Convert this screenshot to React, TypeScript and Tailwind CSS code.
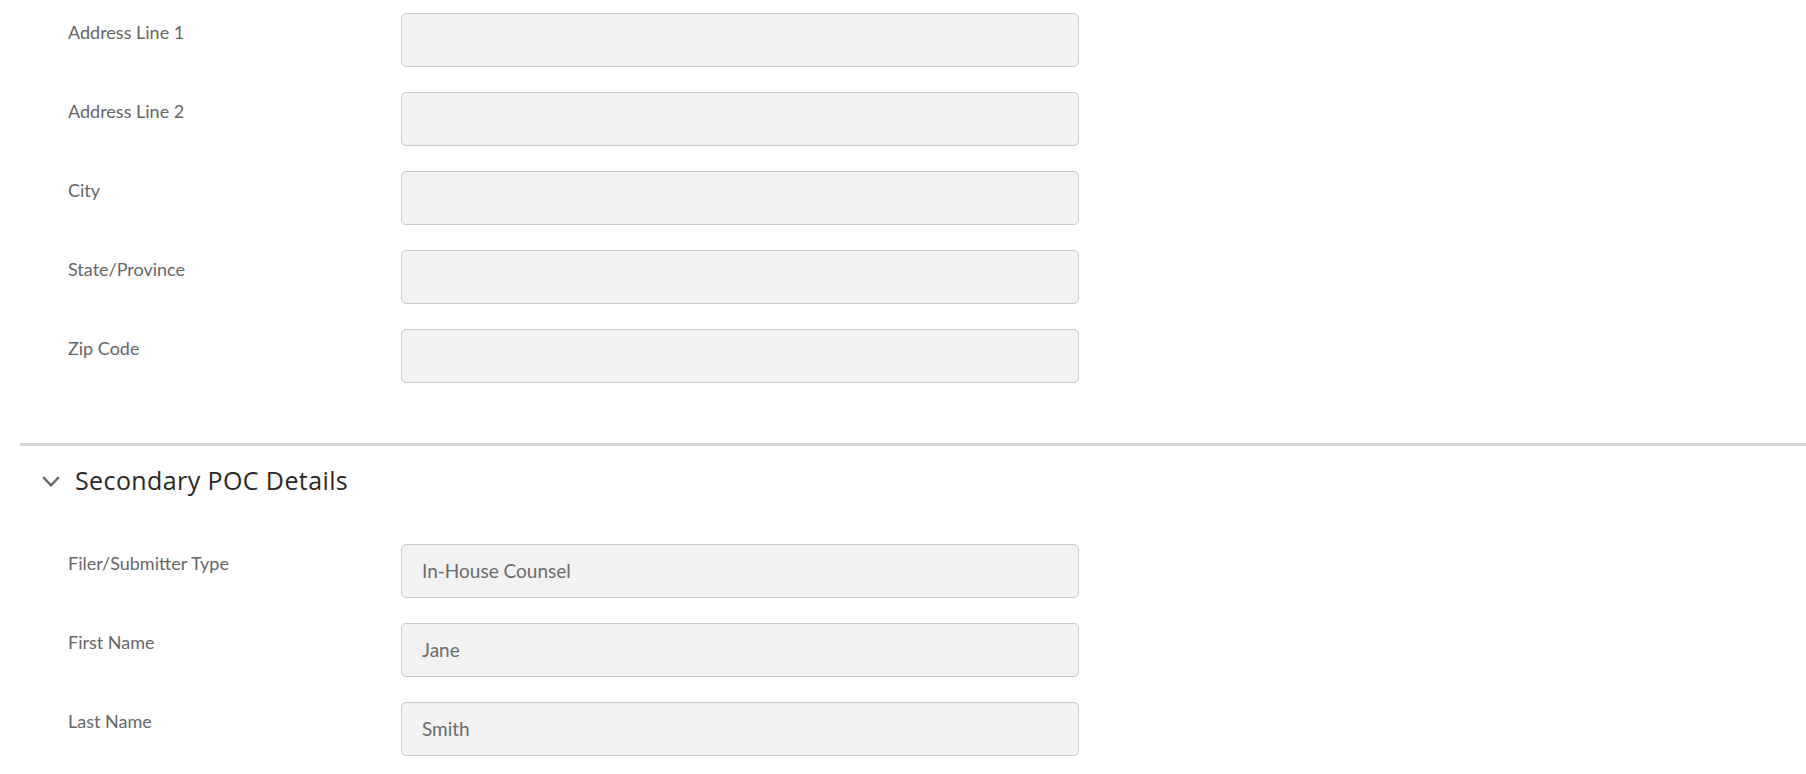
import React from "react";

function Field({ label, value }: { label: string; value?: string }) {
  return (
    <div className="flex items-start">
      <div
        className="w-[333px] shrink-0 pt-[7px] text-[18px] leading-6 text-[#666666]"
        style={{ fontFamily: "Lato, 'Liberation Sans', sans-serif" }}
      >
        {label}
      </div>
      <div
        className="flex h-[54px] w-[678px] items-center rounded-[5px] border border-[#c9c9c9] bg-[#f2f2f2] pl-[20px] text-[19px] text-[#6b6b6b]"
        style={{ fontFamily: "Lato, 'Liberation Sans', sans-serif" }}
      >
        {value}
      </div>
    </div>
  );
}

export default function App() {
  return (
    <div className="h-[774px] w-full overflow-hidden bg-white">
      <div className="flex flex-col gap-[25px] pl-[68px] pt-[13px]">
        <Field label="Address Line 1" />
        <Field label="Address Line 2" />
        <Field label="City" />
        <Field label="State/Province" />
        <Field label="Zip Code" />
      </div>
      <div className="ml-[20px] mt-[60px] h-[3px] bg-[#d4d4d4]" />
      <div className="flex items-center pl-[42px] pt-[18px]">
        <svg width="18" height="11" viewBox="0 0 18 11" className="mr-[15px] mt-[3px]">
          <polyline points="1.2,1.2 9,9.4 16.8,1.2" fill="none" stroke="#6b6b6b" strokeWidth="2.4" />
        </svg>
        <span
          className="text-[25px] font-medium leading-8 tracking-[0.4px] text-[#2b2826]"
          style={{ fontFamily: "'Open Sans', 'Liberation Sans', sans-serif" }}
        >
          Secondary POC Details
        </span>
      </div>
      <div className="flex flex-col gap-[25px] pl-[68px] pt-[48px]">
        <Field label="Filer/Submitter Type" value="In-House Counsel" />
        <Field label="First Name" value="Jane" />
        <Field label="Last Name" value="Smith" />
      </div>
    </div>
  );
}
